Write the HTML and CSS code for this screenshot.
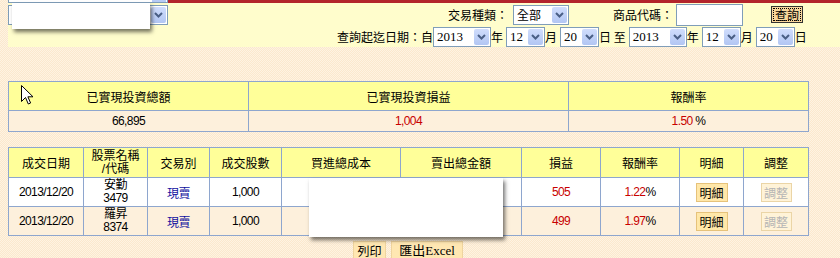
FILE: index.html
```html
<!DOCTYPE html>
<html lang="zh-Hant">
<head>
<meta charset="utf-8">
<title>已實現損益查詢</title>
<link rel="stylesheet" href="styles.css">
</head>
<body>
<div class="topstrip">
  <div class="cutsel"><span class="cutarr"></span></div>
  <div class="redbar"></div>
</div>
<div class="panel">
  <div class="row1">
    <div class="sel acct"><span class="v"></span><span class="ar"><svg width="9" height="6" viewBox="0 0 9 6"><path d="M1 1 L4.5 4.5 L8 1" fill="none" stroke="#4A5F86" stroke-width="2"/></svg></span></div>
    <span class="lbl lbl-type">交易種類：</span>
    <div class="sel s-type"><span class="v cjk">全部</span><span class="ar"><svg width="9" height="6" viewBox="0 0 9 6"><path d="M1 1 L4.5 4.5 L8 1" fill="none" stroke="#4A5F86" stroke-width="2"/></svg></span></div>
    <span class="lbl lbl-code">商品代碼：</span>
    <span class="inp"></span>
    <button class="qbtn" type="button"><span>查詢</span></button>
  </div>
  <div class="row2">
    <span class="lbl">查詢起迄日期：自</span>
    <div class="sel s-year"><span class="v">2013</span><span class="ar"><svg width="9" height="6" viewBox="0 0 9 6"><path d="M1 1 L4.5 4.5 L8 1" fill="none" stroke="#4A5F86" stroke-width="2"/></svg></span></div>
    <span class="lbl">年</span>
    <div class="sel s-md"><span class="v">12</span><span class="ar"><svg width="9" height="6" viewBox="0 0 9 6"><path d="M1 1 L4.5 4.5 L8 1" fill="none" stroke="#4A5F86" stroke-width="2"/></svg></span></div>
    <span class="lbl">月</span>
    <div class="sel s-md"><span class="v">20</span><span class="ar"><svg width="9" height="6" viewBox="0 0 9 6"><path d="M1 1 L4.5 4.5 L8 1" fill="none" stroke="#4A5F86" stroke-width="2"/></svg></span></div>
    <span class="lbl">日 至</span>
    <div class="sel s-year"><span class="v">2013</span><span class="ar"><svg width="9" height="6" viewBox="0 0 9 6"><path d="M1 1 L4.5 4.5 L8 1" fill="none" stroke="#4A5F86" stroke-width="2"/></svg></span></div>
    <span class="lbl">年</span>
    <div class="sel s-md"><span class="v">12</span><span class="ar"><svg width="9" height="6" viewBox="0 0 9 6"><path d="M1 1 L4.5 4.5 L8 1" fill="none" stroke="#4A5F86" stroke-width="2"/></svg></span></div>
    <span class="lbl">月</span>
    <div class="sel s-md"><span class="v">20</span><span class="ar"><svg width="9" height="6" viewBox="0 0 9 6"><path d="M1 1 L4.5 4.5 L8 1" fill="none" stroke="#4A5F86" stroke-width="2"/></svg></span></div>
    <span class="lbl">日</span>
  </div>
</div>

<table class="grid summary">
  <colgroup><col class="c240"><col class="c320"><col class="c240"></colgroup>
  <tr class="hd"><th>已實現投資總額</th><th>已實現投資損益</th><th>報酬率</th></tr>
  <tr class="alt"><td>66,895</td><td class="red">1,004</td><td><span class="red">1.50</span> %</td></tr>
</table>

<table class="grid detail">
  <colgroup>
    <col class="w75"><col class="w64"><col class="w62"><col class="w72"><col class="w119">
    <col class="w121"><col class="w79"><col class="w79"><col class="w64"><col class="w65">
  </colgroup>
  <tr class="hd">
    <th>成交日期</th><th class="two">股票名稱<br>/代碼</th><th>交易別</th><th>成交股數</th><th>買進總成本</th>
    <th>賣出總金額</th><th>損益</th><th>報酬率</th><th>明細</th><th>調整</th>
  </tr>
  <tr class="wht">
    <td>2013/12/20</td><td class="two">安勤<br>3479</td><td class="blue">現賣</td><td>1,000</td><td></td>
    <td></td><td class="red">505</td><td><span class="red">1.22</span>%</td>
    <td><button class="sbtn" type="button">明細</button></td><td><button class="sbtn off" type="button">調整</button></td>
  </tr>
  <tr class="alt">
    <td>2013/12/20</td><td class="two">羅昇<br>8374</td><td class="blue">現賣</td><td>1,000</td><td></td>
    <td></td><td class="red">499</td><td><span class="red">1.97</span>%</td>
    <td><button class="sbtn" type="button">明細</button></td><td><button class="sbtn off" type="button">調整</button></td>
  </tr>
</table>

<div class="actions">
  <button class="abtn print" type="button">列印</button>
  <button class="abtn excel" type="button">匯出Excel</button>
</div>

<div class="popup"></div>
<div class="mask"></div>
<svg class="cursor" width="13" height="21" viewBox="0 0 13 21"><path d="M0.5 0.5 L0.5 16.5 L4.5 12.5 L7.3 19 L9.6 18 L6.9 11.8 L12 11.8 Z" fill="#fff" stroke="#000" stroke-width="1" stroke-linejoin="miter"/></svg>
</body>
</html>
```
FILE: styles.css
```css
* { box-sizing: border-box; }
html, body { margin: 0; }
body {
  position: relative;
  padding: 0 0 0 8px;
  width: 840px;
  height: 258px;
  overflow: hidden;
  font: 12px "Liberation Sans", "Noto Sans CJK TC", sans-serif;
  color: #000;
  background-color: #FCEDD6;
  background-image: repeating-conic-gradient(#FBE8CD 0 25%, #FEF3E2 0 50%);
  background-size: 2px 2px;
}
.cjk, .lbl, th { font-family: "Noto Sans CJK TC", sans-serif; }

.topstrip { display: flex; height: 3px; }
.cutsel {
  width: 160px; height: 3px;
  border: 1px solid #7F9DB9; border-top: 0;
  background: #fff;
  display: flex; justify-content: flex-end;
}
.cutarr { width: 14px; height: 2px; margin-right: 1px; background: #B6CAF4; }
.redbar { flex: 1; background: #B3242B; }

.panel { background: #FFFDCC; height: 44px; display: flex; flex-direction: column; }
.row1 { display: flex; align-items: center; height: 23px; }
.row2 { display: flex; align-items: center; height: 21px; padding-left: 329px; }
.lbl { font-size: 12px; line-height: 14px; white-space: pre; }

.sel {
  display: inline-flex; align-items: center; justify-content: space-between;
  height: 20px; padding: 1px 1px 1px 2px;
  border: 1px solid #7F9DB9; background: #fff;
}
.sel .v { font-family: "Liberation Serif", serif; font-size: 13px; line-height: 14px; padding-left: 1px; }
.sel .v.cjk { font-family: "Noto Sans CJK TC", sans-serif; font-size: 12px; }
.sel .ar {
  width: 15px; height: 16px; border-radius: 2px;
  background: linear-gradient(#D0DDFC, #B2C6F3);
  display: flex; align-items: center; justify-content: center;
}
.acct { width: 160px; }
.lbl-type { margin-left: 280px; }
.s-type { width: 56px; margin-left: 5px; }
.lbl-code { margin-left: 44px; }
.inp { width: 67px; height: 22px; margin-left: 3px; border: 1px solid #7F9DB9; background: #fff; }
.qbtn {
  width: 32px; height: 17px; margin-left: 28px; padding: 1px;
  border: 1px solid #333; background: #F9D79C;
  font: 12px "Noto Sans CJK TC", sans-serif; line-height: 13px;
  display: flex;
}
.qbtn span { flex: 1; border: 1px dotted #000; display: flex; align-items: center; justify-content: center; }
.s-year { width: 58px; }
.s-md { width: 39px; }
.row2 .lbl + .sel { margin-left: 3px; }
.row2 .lbl:first-child + .sel { margin-left: 0; }

.grid { border-collapse: collapse; width: 800px; table-layout: fixed; }
.grid th, .grid td {
  border: 1px solid #8EA6CE; padding: 0; text-align: center; vertical-align: middle;
  font-weight: normal; line-height: 13px;
}
.grid .hd th { background: #FFFF99; }
.grid .alt td { background: #FDF0DC; }
.grid .wht td { background: #fff; }
.summary { margin-top: 34px; }
.summary .hd { height: 29px; }
.summary .alt { height: 21px; }
.c240 { width: 240px; }
.c320 { width: 320px; }
.detail { margin-top: 15px; }
.detail .hd { height: 30px; }
.detail .wht, .detail .alt { height: 29px; }
.w75 { width: 75px; } .w64 { width: 64px; } .w62 { width: 62px; } .w72 { width: 72px; }
.w119 { width: 119px; } .w121 { width: 121px; } .w79 { width: 79px; } .w65 { width: 65px; }
.grid td { letter-spacing: -0.6px; }
.two { line-height: 13px; font-family: "Liberation Sans", "Noto Sans CJK TC", sans-serif; }
.red { color: #C80000; }
.blue { color: #1010A0; font-family: "Noto Sans CJK TC", sans-serif; letter-spacing: 0; }

.sbtn {
  width: 32px; height: 19px; padding: 0;
  border: 1px solid #E6C27A; background: #FFE7A9;
  font: 12px "Noto Sans CJK TC", sans-serif; line-height: 15px; color: #000;
}
.sbtn.off { width: 31px; color: #B4B4B4; background: #FFF3D8; border-color: #EBD5A6; }

.actions { display: flex; justify-content: center; gap: 5px; width: 800px; margin-top: 5px; }
.abtn {
  height: 19px; padding: 0;
  border: 1px solid #EFD49E; background: #FFE7B2;
  font: 12px "Noto Sans CJK TC", sans-serif; line-height: 15px; white-space: nowrap;
}
.print { width: 33px; }
.excel { width: 72px; font-family: "Liberation Serif", "Noto Sans CJK TC", serif; font-size: 13px; }

.popup {
  position: absolute; left: 12px; top: 3px; width: 138px; height: 26px;
  background: #fff; box-shadow: 2px 3px 4px rgba(0, 0, 0, 0.55);
}
.mask {
  position: absolute; left: 309px; top: 178px; width: 194px; height: 59px;
  background: #fff; box-shadow: 2px 3px 4px rgba(0, 0, 0, 0.55);
}
.cursor { position: absolute; left: 21px; top: 85px; }
```
